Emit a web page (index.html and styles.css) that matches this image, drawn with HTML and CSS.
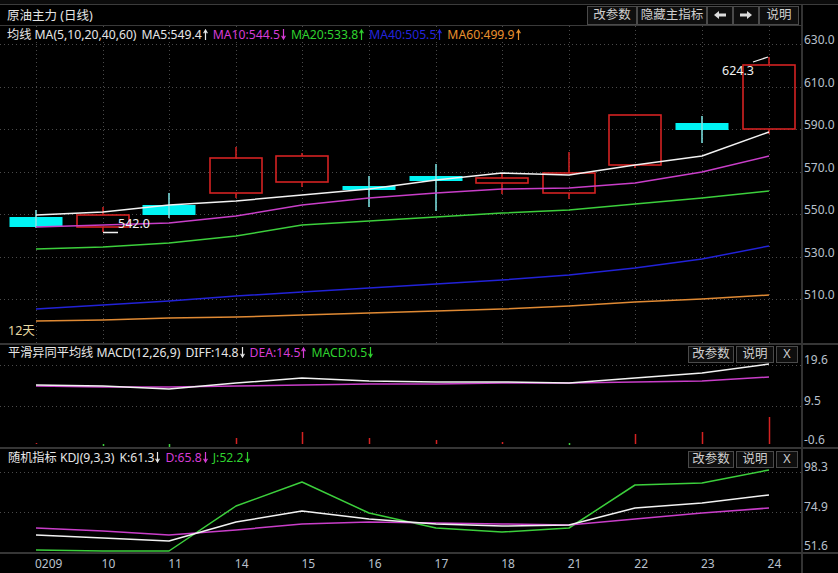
FILE: index.html
```html
<!DOCTYPE html>
<html>
<head>
<meta charset="utf-8">
<title>原油主力 (日线)</title>
<link rel="stylesheet" href="styles.css">
</head>
<body>
<svg class="defs" aria-hidden="true">
  <symbol id="up" viewBox="0 0 5 11"><path d="M2.5 1.5V11M0.6 4.2L2.5 1L4.4 4.2" fill="none" stroke="currentColor" stroke-width="1.2"/></symbol>
  <symbol id="dn" viewBox="0 0 5 11"><path d="M2.5 0V9.5M0.6 6.8L2.5 10L4.4 6.8" fill="none" stroke="currentColor" stroke-width="1.2"/></symbol>
</svg>
<div class="app">
  <div class="topstrip"></div>
  <div class="frame">
    <div class="titlebar">
      <span class="title">原油主力 (日线)</span>
      <div class="btns">
        <span class="btn w50">改参数</span>
        <span class="btn w70">隐藏主指标</span>
        <span class="btn w26"><svg class="navicon" viewBox="0 0 12 8"><path d="M0 4L5 0V2.5H12V5.5H5V8Z" fill="#dcdcdc"/></svg></span>
        <span class="btn w26"><svg class="navicon" viewBox="0 0 12 8"><path d="M12 4L7 0V2.5H0V5.5H7V8Z" fill="#dcdcdc"/></svg></span>
        <span class="btn w40">说明</span>
      </div>
    </div>
    <div class="axis-blank"></div>

    <div class="panel main">
      <svg class="plot" viewBox="0 26 801 317" preserveAspectRatio="none">
        <g class="grid">
          <path d="M0 44.5H801M0 87.5H801M0 129.5H801M0 172.5H801M0 214.5H801M0 257.5H801M0 299.5H801"/>
          <path d="M36.5 26V343M103.5 26V343M169.5 26V343M236.5 26V343M302.5 26V343M369.5 26V343M436.5 26V343M502.5 26V343M569.5 26V343M635.5 26V343M702.5 26V343M769.5 26V343"/>
        </g>
        <g class="bars-up">
          <rect x="77" y="215" width="52" height="12"/>
          <rect x="210" y="158" width="52" height="35"/>
          <rect x="276" y="156" width="52" height="26"/>
          <rect x="476" y="178" width="52" height="5"/>
          <rect x="543" y="173" width="52" height="20"/>
          <rect x="609" y="115" width="52" height="50"/>
          <rect x="743" y="65" width="52" height="64"/>
        </g>
        <g class="wick-up">
          <path d="M103 207V215M103 227V232M236 147V158M236 193V198M302 153V156M302 182V187M502 173V178M502 183V194M569 152V173M569 193V199M635 165V168M769 57V65M769 129V134"/>
        </g>
        <g class="bars-dn">
          <rect x="9.5" y="217" width="53" height="10"/>
          <rect x="142.5" y="205" width="53" height="10"/>
          <rect x="342.5" y="186" width="53" height="4"/>
          <rect x="409.5" y="176" width="53" height="5"/>
          <rect x="675.5" y="123" width="53" height="7"/>
        </g>
        <g class="wick-dn">
          <path d="M36 210V228M169 193V218M369 176V207M436 164V211M702 116V143"/>
        </g>
        <polyline class="l-or" points="36,321 103,320 169,318 236,317 302,315 369,313 436,311 502,309 569,306 635,302 702,299 769,295"/>
        <polyline class="l-bl" points="36,309 103,305 169,301 236,296 302,292 369,288 436,284 502,280 569,275 635,268 702,259 769,246"/>
        <polyline class="l-gr" points="36,249 103,247 169,243 236,236 302,225 369,221 436,217 502,213 569,210 635,204 702,198 769,191"/>
        <polyline class="l-mg" points="36,227 103,225 169,223 236,216 302,205 369,198 436,193 502,189 569,188 635,183 702,172 769,156"/>
        <polyline class="l-wh" points="36,215 103,212 169,205 236,201 302,195 369,189 436,180 502,173 569,175 635,165 702,156 769,132"/>
        <path class="leader" d="M103 232.5H118M753 62L768 57"/>
        <text class="hl" x="118" y="228">542.0</text>
        <text class="hl" x="722" y="75">624.3</text>
      </svg>
      <div class="legend">
        <span class="c-wh">均线 MA(5,10,20,40,60)</span>
        <span class="c-wh">MA5:549.4<svg class="ar"><use href="#up"/></svg></span>
        <span class="c-mg">MA10:544.5<svg class="ar"><use href="#dn"/></svg></span>
        <span class="c-gr">MA20:533.8<svg class="ar"><use href="#up"/></svg></span>
        <span class="c-bl">MA40:505.5<svg class="ar"><use href="#up"/></svg></span>
        <span class="c-or">MA60:499.9<svg class="ar"><use href="#up"/></svg></span>
      </div>
      <div class="days">12天</div>
    </div>
    <div class="axis ax-main">
      <span>630.0</span><span>610.0</span><span>590.0</span><span>570.0</span><span>550.0</span><span>530.0</span><span>510.0</span>
    </div>

    <div class="panel macd">
      <svg class="plot" viewBox="0 345 801 102" preserveAspectRatio="none">
        <g class="grid"><path d="M0 365.5H801M0 406.5H801"/></g>
        <g class="hist-up"><path d="M36.5 443V444M236.5 438V444M302.5 432V444M369.5 438V444M436.5 440V444M502.5 442V444M635.5 434V444M702.5 432V444M769.5 417V444"/></g>
        <g class="hist-dn"><path d="M103.5 444V446M169.5 444V447M569.5 443V445"/></g>
        <polyline class="l-mg" points="36,386 103,387 169,387 236,386 302,385 369,384 436,384 502,383 569,383 635,382 702,381 769,377"/>
        <polyline class="l-wh" points="36,385 103,386 169,389 236,383 302,378 369,381 436,382 502,382 569,383 635,378 702,373 769,364"/>
      </svg>
      <div class="sub-legend s-macd">
        <span class="c-wh">平滑异同平均线 MACD(12,26,9)</span>
        <span class="c-wh">DIFF:14.8<svg class="ar"><use href="#dn"/></svg></span>
        <span class="c-mg">DEA:14.5<svg class="ar"><use href="#up"/></svg></span>
        <span class="c-gr">MACD:0.5<svg class="ar"><use href="#dn"/></svg></span>
      </div>
      <div class="sub-btns sb-macd">
        <span class="btn w46">改参数</span>
        <span class="btn w38">说明</span>
        <span class="btn w22">X</span>
      </div>
    </div>
    <div class="axis ax-macd">
      <span>19.6</span><span>9.5</span><span>-0.6</span>
    </div>

    <div class="panel kdj">
      <svg class="plot" viewBox="0 449 801 103" preserveAspectRatio="none">
        <g class="grid"><path d="M0 472.5H801M0 512.5H801"/></g>
        <polyline class="l-gr" points="36,550 103,551 169,551 236,506 302,482 369,513 436,528 502,532 569,528 635,485 702,483 769,470"/>
        <polyline class="l-mg" points="36,528 103,531 169,535 236,530 302,524 369,522 436,523 502,524 569,525 635,519 702,513 769,508"/>
        <polyline class="l-wh" points="36,535 103,538 169,541 236,522 302,511 369,519 436,524 502,526 569,525 635,508 702,503 769,495"/>
      </svg>
      <div class="sub-legend s-kdj">
        <span class="c-wh">随机指标 KDJ(9,3,3)</span>
        <span class="c-wh">K:61.3<svg class="ar"><use href="#dn"/></svg></span>
        <span class="c-mg">D:65.8<svg class="ar"><use href="#dn"/></svg></span>
        <span class="c-gr">J:52.2<svg class="ar"><use href="#dn"/></svg></span>
      </div>
      <div class="sub-btns sb-kdj">
        <span class="btn w46">改参数</span>
        <span class="btn w38">说明</span>
        <span class="btn w22">X</span>
      </div>
    </div>
    <div class="axis ax-kdj">
      <span>98.3</span><span>74.9</span><span>51.6</span>
    </div>

    <div class="dates">
      <span>0209</span><span>10</span><span>11</span><span>14</span><span>15</span><span>16</span><span>17</span><span>18</span><span>21</span><span>22</span><span>23</span><span>24</span>
    </div>
    <div class="axis-blank"></div>
  </div>
</div>
</body>
</html>
```

FILE: styles.css
```css
* { box-sizing: border-box; }

html, body {
  margin: 0;
  padding: 0;
  background: #000;
}

body {
  width: 838px;
  height: 573px;
  overflow: hidden;
  font-family: "Noto Sans", "Noto Sans CJK SC", sans-serif;
  font-size: 12px;
  color: #e4e4e4;
}

.defs {
  position: absolute;
  width: 0;
  height: 0;
  overflow: hidden;
}

.topstrip {
  height: 5px;
  background: #0b0b0b;
  border-bottom: 1px solid #3c3c3c;
}

.frame {
  display: grid;
  grid-template-columns: 803px 35px;
  grid-template-rows: 21px 319px 104px 105px 19px;
}

.titlebar {
  display: flex;
  align-items: center;
  justify-content: space-between;
  padding: 0 2px 0 7px;
  border-right: 2px solid #333;
  border-bottom: 1px solid #3a3a3a;
}

.title {
  color: #e4e4e4;
  font-size: 12.5px;
  line-height: 17px;
}

.btns {
  display: flex;
  gap: 0;
  height: 19px;
}

.btn {
  display: flex;
  align-items: center;
  justify-content: center;
  height: 100%;
  background: #0e0e0e;
  border: 1px solid #4a4a4a;
  color: #cfcfcf;
  font-size: 12.5px;
  line-height: 1;
  white-space: nowrap;
}

.w50 { width: 50px; }
.w70 { width: 70px; }
.w26 { width: 26px; }
.w40 { width: 40px; }
.w46 { width: 46px; }
.w38 { width: 38px; }
.w22 { width: 22px; }

.navicon {
  width: 12px;
  height: 8px;
  display: block;
}

.panel {
  position: relative;
  border-right: 2px solid #333;
  border-bottom: 2px solid #363636;
}

.axis {
  border-bottom: 2px solid #363636;
  display: flex;
  flex-direction: column;
  color: #b9c0cc;
  line-height: 14px;
  padding-left: 1px;
}

.axis span { display: block; flex: none; }

.ax-main { padding-top: 7px; }
.ax-main span { height: 42.5px; }

.ax-macd { padding-top: 8px; }
.ax-macd span:nth-child(1) { height: 41px; }
.ax-macd span:nth-child(2) { height: 39px; }

.ax-kdj { padding-top: 11px; }
.ax-kdj span:nth-child(1) { height: 40px; }
.ax-kdj span:nth-child(2) { height: 39px; }

.plot {
  display: block;
  width: 801px;
  height: 100%;
}

.grid path {
  fill: none;
  stroke: #4a4a4a;
  stroke-width: 1;
  stroke-dasharray: 1 3;
  shape-rendering: crispEdges;
}

.bars-up rect {
  fill: none;
  stroke: #d42222;
  stroke-width: 1.6;
}

.wick-up path {
  stroke: #d42222;
  stroke-width: 1.5;
  fill: none;
}

.bars-dn rect {
  fill: #00f4f4;
  stroke: none;
}

.wick-dn path {
  stroke: #7fe6e6;
  stroke-width: 1.5;
  fill: none;
}

.hist-up path {
  stroke: #d42222;
  stroke-width: 1.5;
  fill: none;
}

.hist-dn path {
  stroke: #3ccf3c;
  stroke-width: 1.5;
  fill: none;
}

polyline {
  fill: none;
  stroke-width: 1.5;
  stroke-linejoin: round;
}

.l-wh { stroke: #f2f2f2; }
.l-mg { stroke: #c93ec9; }
.l-gr { stroke: #3ccf3c; }
.l-bl { stroke: #2222d8; }
.l-or { stroke: #e08a34; }

.leader {
  stroke: #f2f2f2;
  stroke-width: 1.3;
  fill: none;
}

.hl {
  fill: #f0f0f0;
  font-family: "Noto Sans", sans-serif;
  font-size: 12.5px;
}

.legend,
.sub-legend {
  position: absolute;
  display: flex;
  gap: 5px;
  font-size: 12.2px;
  line-height: 17px;
  white-space: nowrap;
}

.legend { top: 0; left: 7px; }
.s-macd { top: -1px; left: 8px; }
.s-kdj { top: 0; left: 8px; }

.c-wh { color: #e6e6e6; }
.c-mg { color: #d63cd6; }
.c-gr { color: #2fd22f; }
.c-bl { color: #2424dc; }
.c-or { color: #e8902e; }

.ar {
  width: 5px;
  height: 11px;
  margin-left: 1px;
  vertical-align: -1px;
}

.days {
  position: absolute;
  left: 8px;
  top: 296px;
  font-size: 12.5px;
  line-height: 17px;
  color: #e8d9a2;
}

.sub-btns {
  position: absolute;
  right: 3px;
  display: flex;
  gap: 2px;
  height: 17px;
}

.sb-macd { top: 1px; }
.sb-kdj { top: 2px; }

.dates {
  display: grid;
  grid-template-columns: repeat(12, 66.6px);
  padding-left: 35px;
  border-right: 2px solid #333;
  color: #b9c0cc;
  line-height: 19px;
  white-space: nowrap;
}
```
